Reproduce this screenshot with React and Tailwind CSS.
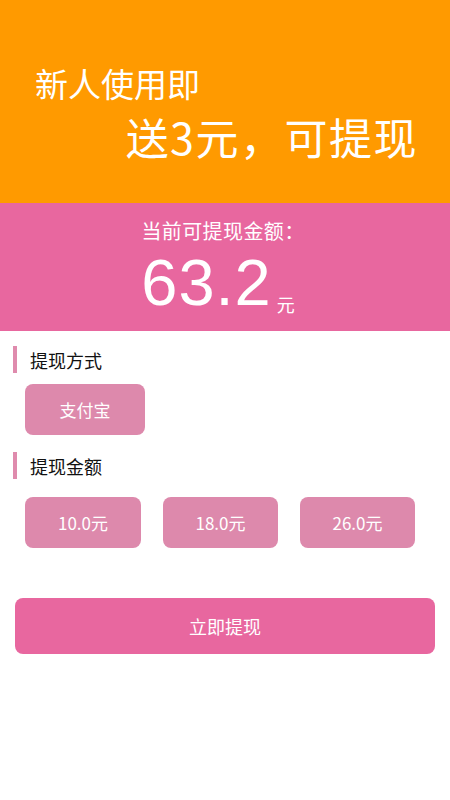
import React from "react";

const font = { fontFamily: '"Noto Sans CJK SC", "Noto Sans", sans-serif' };

function SectionTitle({ children }) {
  return (
    <div className="flex items-center h-[27px] pl-[13px]">
      <div className="w-[4px] h-[27px] bg-[#df8bad]" />
      <div className="ml-[13px] text-[18px] leading-none text-[#111]">{children}</div>
    </div>
  );
}

function PinkBtn({ children, w }) {
  return (
    <div className={`${w} h-[51px] rounded-[8px] bg-[#dd89ac] flex items-center justify-center text-white text-[17px]`}>
      {children}
    </div>
  );
}

export default function App() {
  return (
    <div className="w-[450px] h-[800px] bg-white" style={font}>
      <div className="h-[203px] bg-[#ff9a00] flex flex-col px-[35px] pt-[63px] text-white">
        <div className="text-[33px] leading-[40px]">新人使用即</div>
        <div className="text-[43px] leading-[50px] tracking-[1.5px] self-end mt-[8px] mr-[-3px]">送3元，可提现</div>
      </div>
      <div className="h-[128px] bg-[#e8679f] flex flex-col items-center text-white">
        <div className="text-[20px] leading-[28px] tracking-[0.4px] mt-[14px] mr-[4px]">当前可提现金额：</div>
        <div className="flex items-end mt-[6px] mr-[14px]">
          <span className="text-[65px] leading-[64px] tracking-[1px]" style={{ fontFamily: '"Liberation Sans", Arial, sans-serif' }}>63.2</span>
          <span className="text-[18px] leading-[18px] ml-[5px] mb-[2px]">元</span>
        </div>
      </div>
      <div className="pt-[15px]">
        <SectionTitle>提现方式</SectionTitle>
        <div className="pl-[25px] mt-[11px]">
          <PinkBtn w="w-[120px]">支付宝</PinkBtn>
        </div>
        <div className="mt-[17px]">
          <SectionTitle>提现金额</SectionTitle>
        </div>
        <div className="pl-[25px] mt-[18px] flex gap-[22px]">
          <PinkBtn w="w-[116px]">10.0元</PinkBtn>
          <PinkBtn w="w-[115px]">18.0元</PinkBtn>
          <PinkBtn w="w-[115px]">26.0元</PinkBtn>
        </div>
        <div className="px-[15px] mt-[50px]">
          <div className="h-[56px] rounded-[8px] bg-[#e8679f] flex items-center justify-center text-white text-[18px]">
            立即提现
          </div>
        </div>
      </div>
    </div>
  );
}
